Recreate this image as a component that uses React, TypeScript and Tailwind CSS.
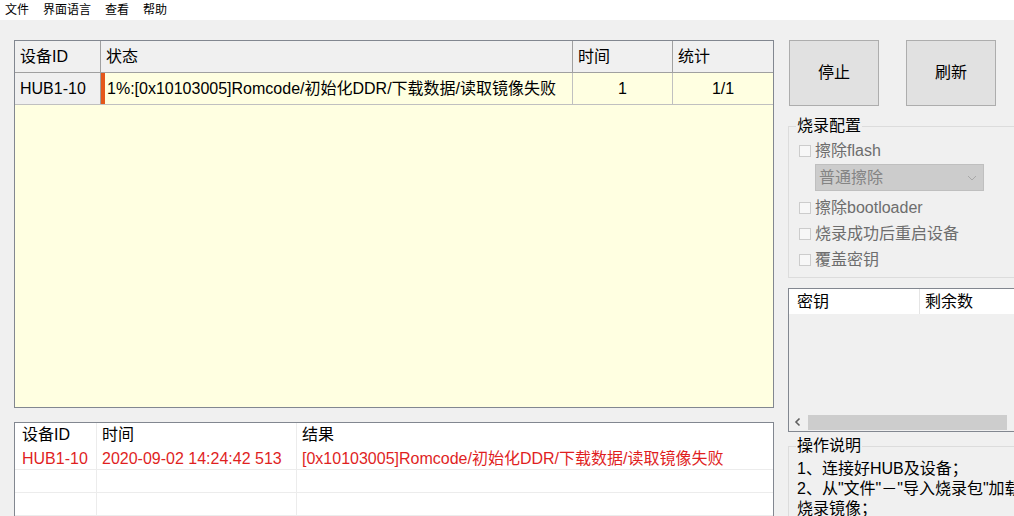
import React from "react";

const font = "font-['Liberation_Sans','Noto_Sans_CJK_SC',sans-serif]";

function CheckRow({ label }: { label: string }) {
  return (
    <div className="flex items-center h-[26px] pl-[10px]">
      <span className="w-[12px] h-[12px] border border-[#cccccc] bg-[#f7f7f7]" />
      <span className="ml-[4px] text-[16px] leading-[20px] text-[#6d6d6d]">{label}</span>
    </div>
  );
}

export default function App() {
  return (
    <div className={`w-[1014px] h-[516px] overflow-hidden bg-[#f0f0f0] flex flex-col text-black ${font}`}>
      {/* menu */}
      <div className="h-[20px] bg-white flex items-center text-[12px] leading-[20px] shrink-0">
        <span className="ml-[5px]">文件</span>
        <span className="ml-[14px]">界面语言</span>
        <span className="ml-[14px]">查看</span>
        <span className="ml-[14px]">帮助</span>
      </div>

      <div className="flex flex-1 min-h-0 pt-[20px] pl-[14px]">
        {/* left column */}
        <div className="w-[760px] shrink-0 flex flex-col">
          {/* device grid */}
          <div className="h-[368px] shrink-0 border border-[#828790] bg-[#ffffe1] flex flex-col">
            <div className="flex h-[32px] bg-[#f0f0f0] border-b border-[#a0a0a0] text-[16px] leading-[32px]">
              <div className="w-[86px] pl-[5px] border-r border-[#a0a0a0]">设备ID</div>
              <div className="w-[472px] pl-[5px] border-r border-[#a0a0a0]">状态</div>
              <div className="w-[100px] pl-[5px] border-r border-[#a0a0a0]">时间</div>
              <div className="flex-1 pl-[5px]">统计</div>
            </div>
            <div className="flex h-[32px] border-b border-[#c0c0c0] text-[16px] leading-[32px]">
              <div className="w-[86px] pl-[5px] bg-[#f0f0f0] border-r border-[#a0a0a0]">HUB1-10</div>
              <div className="w-[472px] flex border-r border-[#c0c0c0]">
                <span className="w-[4px] bg-[#e4571a] shrink-0" />
                <span className="pl-[2px] whitespace-nowrap">1%:[0x10103005]Romcode/初始化DDR/下载数据/读取镜像失败</span>
              </div>
              <div className="w-[100px] text-center border-r border-[#c0c0c0]">1</div>
              <div className="flex-1 text-center">1/1</div>
            </div>
          </div>

          {/* log grid */}
          <div className="mt-[14px] flex-1 border border-[#828790] border-b-0 bg-white text-[16px] leading-[23px]">
            <div className="flex h-[24px]">
              <div className="w-[82px] pl-[7px] border-r border-[#ececec]">设备ID</div>
              <div className="w-[200px] pl-[5px] border-r border-[#ececec]">时间</div>
              <div className="flex-1 pl-[5px]">结果</div>
            </div>
            <div className="flex h-[23px] border-b border-[#ececec] text-[#e01f1f]">
              <div className="w-[82px] pl-[7px] border-r border-[#ececec]">HUB1-10</div>
              <div className="w-[200px] pl-[5px] border-r border-[#ececec] whitespace-nowrap">2020-09-02 14:24:42 513</div>
              <div className="flex-1 pl-[5px] whitespace-nowrap">[0x10103005]Romcode/初始化DDR/下载数据/读取镜像失败</div>
            </div>
            <div className="flex h-[23px] border-b border-[#ececec]">
              <div className="w-[82px] border-r border-[#ececec]" />
              <div className="w-[200px] border-r border-[#ececec]" />
              <div className="flex-1" />
            </div>
            <div className="flex h-[23px] border-b border-[#ececec]">
              <div className="w-[82px] border-r border-[#ececec]" />
              <div className="w-[200px] border-r border-[#ececec]" />
              <div className="flex-1" />
            </div>
          </div>
        </div>

        {/* right column */}
        <div className="ml-[14px] w-[250px] shrink-0 flex flex-col">
          <div className="flex h-[66px] shrink-0 pl-[1px] gap-[27px]">
            <button className="w-[90px] h-[66px] bg-[#e1e1e1] border border-[#adadad] text-[16px]">停止</button>
            <button className="w-[90px] h-[66px] bg-[#e1e1e1] border border-[#adadad] text-[16px]">刷新</button>
          </div>

          <fieldset className="mt-[10px] h-[162px] shrink-0 border border-[#dcdcdc] border-r-0">
            <legend className="ml-[7px] px-[1px] text-[16px] leading-[20px]">烧录配置</legend>
            <div className="mt-[2px]">
              <CheckRow label="擦除flash" />
              <div className="ml-[26px] w-[169px] h-[27px] bg-[#cccccc] border border-[#bfbfbf] flex items-center justify-between px-[3px]">
                <span className="text-[16px] leading-[20px] text-[#848484]">普通擦除</span>
                <svg width="10" height="6" viewBox="0 0 10 6" className="mr-[3px]">
                  <path d="M1 1 L5 5 L9 1" fill="none" stroke="#a8a8a8" strokeWidth="1" />
                </svg>
              </div>
              <div className="h-[4px]" />
              <CheckRow label="擦除bootloader" />
              <CheckRow label="烧录成功后重启设备" />
              <CheckRow label="覆盖密钥" />
            </div>
          </fieldset>

          {/* key list */}
          <div className="mt-[10px] h-[144px] shrink-0 border border-[#828790] border-r-0 flex flex-col">
            <div className="flex h-[25px] bg-white text-[16px] leading-[25px]">
              <div className="w-[131px] pl-[8px] border-r border-[#e5e5e5]">密钥</div>
              <div className="flex-1 pl-[5px]">剩余数</div>
            </div>
            <div className="flex-1" />
            <div className="h-[16px] flex items-center mb-[1px]">
              <svg width="16" height="16" viewBox="0 0 16 16" className="ml-[1px]">
                <path d="M9.5 4.5 L6 8 L9.5 11.5" fill="none" stroke="#606060" strokeWidth="1.6" />
              </svg>
              <div className="ml-[2px] w-[199px] h-[15px] bg-[#cdcdcd]" />
            </div>
          </div>

          <fieldset className="mt-[4px] shrink-0 border border-[#dcdcdc] border-r-0 border-b-0">
            <legend className="ml-[7px] px-[1px] text-[16px] leading-[20px]">操作说明</legend>
            <div className="pt-[3px] pl-[8px] text-[16px] leading-[20px] whitespace-nowrap">
              <div>1、连接好HUB及设备；</div>
              <div>2、从"文件"－"导入烧录包"加载</div>
              <div>烧录镜像；</div>
            </div>
          </fieldset>
        </div>
      </div>
    </div>
  );
}
